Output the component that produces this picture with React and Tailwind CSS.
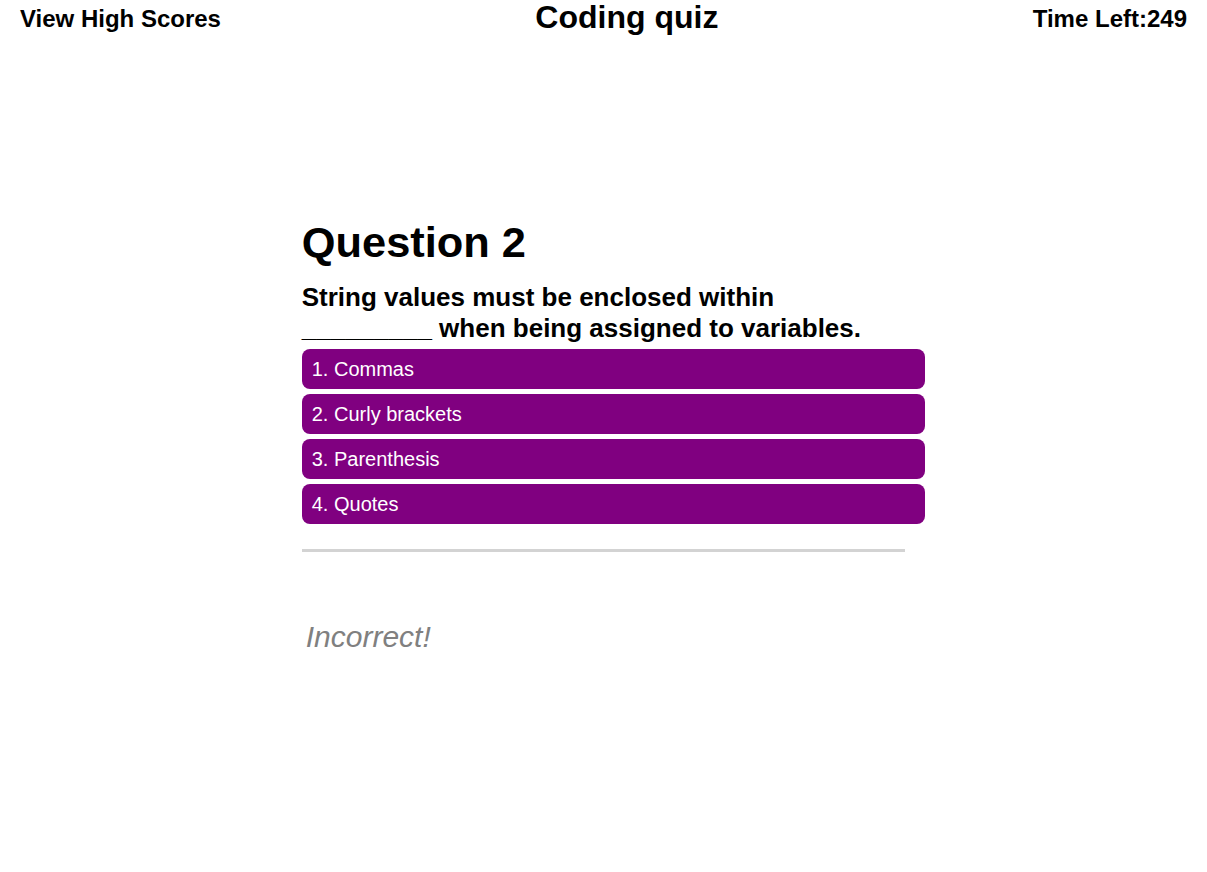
export default function App() {
  const choices = ["1. Commas", "2. Curly brackets", "3. Parenthesis", "4. Quotes"];
  return (
    <div className="min-h-[872px] bg-white text-black" style={{ fontFamily: '"Liberation Sans", Arial, sans-serif' }}>
      <header className="flex items-start justify-between px-5">
        <div className="mt-[4.5px] text-[24px] font-bold leading-[27px]">View High Scores</div>
        <h1 className="mt-[1px] text-[32px] font-bold leading-[32px]">Coding quiz</h1>
        <div className="mt-[4.5px] text-[24px] font-bold leading-[27px]">Time Left:249</div>
      </header>
      <main className="mx-auto mt-[185px] w-1/2">
        <h2 className="text-[43.4px] font-bold leading-[49px]">Question 2</h2>
        <p className="mt-[15px] text-[26px] font-bold leading-[31px]">
          String values must be enclosed within _________ when being assigned to variables.
        </p>
        <div className="mt-[5px] flex flex-col gap-[5px]">
          {choices.map((c) => (
            <button
              key={c}
              className="box-content block h-[40px] w-full rounded-[8px] bg-[#800080] px-[10px] text-left text-[20px] leading-[40px] text-white"
            >
              {c}
            </button>
          ))}
        </div>
        <hr className="mt-[25px] border-0 border-t-[3px] border-[#d3d3d3]" />
        <p className="mt-[68px] pl-[4px] text-[30px] italic leading-[34px] text-[#808080]">Incorrect!</p>
      </main>
    </div>
  );
}
